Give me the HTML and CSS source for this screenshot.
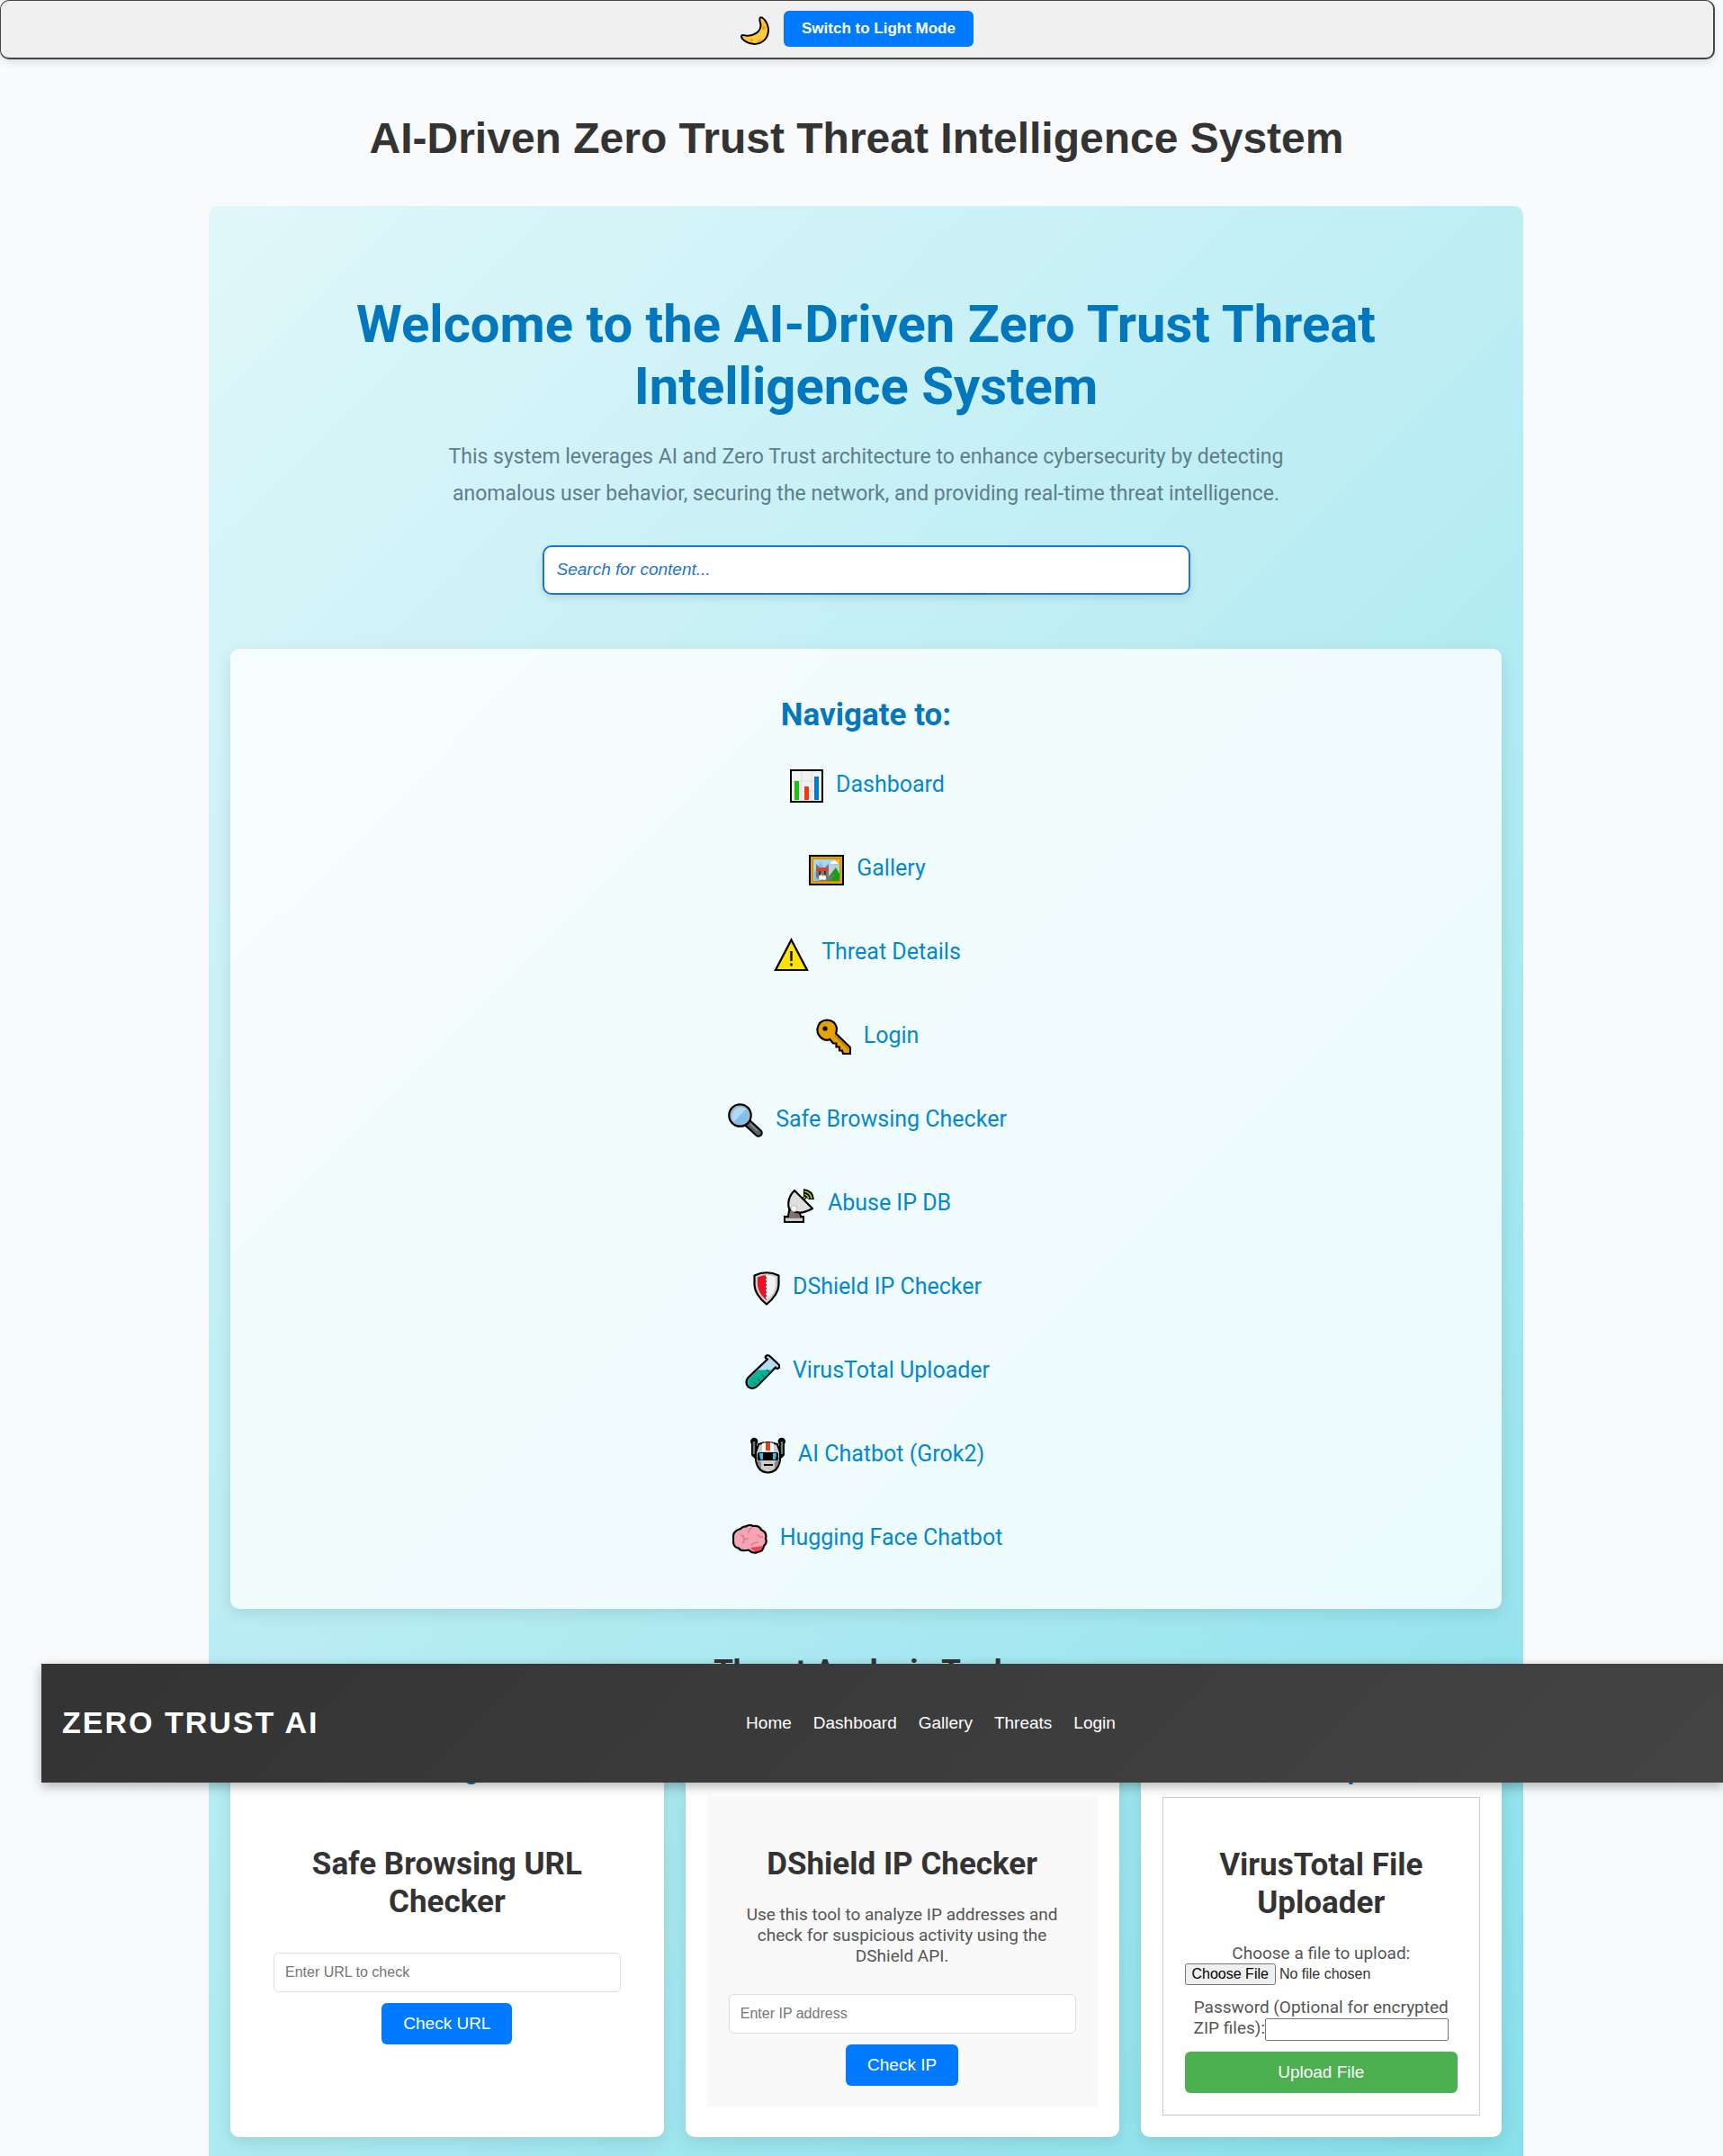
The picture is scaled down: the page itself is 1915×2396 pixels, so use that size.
FILE: index.html
```html
<!DOCTYPE html>
<html lang="en">
<head>
<meta charset="utf-8">
<meta name="viewport" content="width=device-width, initial-scale=1">
<title>AI-Driven Zero Trust Threat Intelligence System</title>
<link rel="stylesheet" href="styles.css">
</head>
<body>
<div class="page">
  <header class="theme-bar">
    <svg class="moon" width="32" height="32" viewBox="0 0 32 32" aria-hidden="true">
      <path d="M22 1.500C24-.3 31 7 31 15.500C31 24.500 24 31 15.500 31C9 31 1 26 1 22.500C1 20 4 21 6 21.500C14 22.500 22 18 22.500 10.500C22.500 7 20 3.500 22 1.500Z" fill="#ffc83d" stroke="#000" stroke-width="2" stroke-linejoin="round"/>
      <circle cx="26" cy="13" r="2" fill="#e8a200"/><circle cx="25.500" cy="8.500" r="1.200" fill="#f0ae14"/><circle cx="12.500" cy="26.500" r="1.500" fill="#e8a200"/>
      <path d="M18.500 29.500Q19.500 25 24 26Q22 29 18.500 29.500Z" fill="#e8a200"/>
    </svg>
    <button type="button" class="theme-button">Switch to Light Mode</button>
  </header>

  <h1 class="page-title">AI-Driven Zero Trust Threat Intelligence System</h1>

  <nav class="navbar" aria-label="Main">
    <div class="brand">ZERO TRUST AI</div>
    <div class="navbar-links">
      <a href="#">Home</a>
      <a href="#">Dashboard</a>
      <a href="#">Gallery</a>
      <a href="#">Threats</a>
      <a href="#">Login</a>
    </div>
  </nav>

  <div class="main-wrap">
    <main class="main">
      <section class="hero">
        <h2 class="hero-title">Welcome to the AI-Driven Zero Trust Threat Intelligence System</h2>
        <p class="hero-text">This system leverages AI and Zero Trust architecture to enhance cybersecurity by detecting anomalous user behavior, securing the network, and providing real-time threat intelligence.</p>
        <input class="search" type="search" placeholder="Search for content..." aria-label="Search for content">
      </section>

      <section class="navigate">
        <h2 class="navigate-title">Navigate to:</h2>
        <ul class="navigate-list">
          <li><a href="#">
            <svg width="37" height="44" viewBox="0 0 37 44" aria-hidden="true"><rect x="1" y="6" width="35" height="35" fill="#f2f2f2" stroke="#000" stroke-width="2"/><path d="M13 7v33M24 7v33M2 18h33M2 29h33" stroke="#ddd"/><path d="M5 18h5v21H5z" fill="#16c60c"/><path d="M16 24h5v15h-5z" fill="#f03a17"/><path d="M27 13h5v26h-5z" fill="#0078d7"/></svg>
            Dashboard</a></li>
          <li><a href="#">
            <svg width="39" height="44" viewBox="0 0 39 44" aria-hidden="true"><rect x="1" y="8" width="37" height="32" fill="#e8a200" stroke="#000" stroke-width="2"/><rect x="4.500" y="11.500" width="30" height="25" fill="#a8d5f2" stroke="#c48a12"/><path d="M6 28l7-13 7 12v9H6z" fill="#83beec"/><circle cx="30.500" cy="15" r="3" fill="#ffb900"/><path d="M24 17q0-3 3-3q2-2 4 1q2 0 1 2z" fill="#fff"/><path d="M24 20h4l2 16h-8z" fill="#ccc"/><path d="M23 30l7-9 4 7v8H19z" fill="#10a30c"/><path d="M11 36q6-6 11-4l6-4v3l-5 5z" fill="#777"/><path d="M8 17l4 4h6l4-4v14q-1 4-7 4t-7-4z" fill="#777"/><path d="M8 22h14v3H8z" fill="#f03a17"/><path d="M12 25v4M18 25v4" stroke="#222" stroke-width="1.500"/><path d="M11 31q4-4 8 0v3q-2 2-4 0q-2 2-4 0z" fill="#fff"/><path d="M14 29h3l-1 2z" fill="#e8632c"/></svg>
            Gallery</a></li>
          <li><a href="#">
            <svg width="39" height="44" viewBox="0 0 39 44" aria-hidden="true"><path d="M19.500 8.500L37 42H2z" fill="#fde300" stroke="#000" stroke-width="2.200"/><path d="M19.500 21v11M19.500 34.500v3" stroke="#000" stroke-width="2.400"/></svg>
            Threat Details</a></li>
          <li><a href="#">
            <svg width="39" height="44" viewBox="0 0 39 44" aria-hidden="true"><path d="M23 13.500Q23 17 22 19.500L38 35v7h-8l-1-3.500h-3v-4h-3.500v-4H19l-3.500-4.500Q11 28 6.500 25Q1 21 1.500 14.500Q3 5 12 4.500Q21.500 5 23 13.500Z" fill="#e8a200" stroke="#000" stroke-width="2.200"/><circle cx="10" cy="14" r="2.600"/><path d="M21 22l15 15" stroke="#c27800" stroke-width="1.500"/></svg>
            Login</a></li>
          <li><a href="#">
            <svg width="39" height="44" viewBox="0 0 39 44" aria-hidden="true"><path d="M22 26l12 11" stroke="#000" stroke-width="9.500" stroke-linecap="round"/><path d="M22 26l12 11" stroke="#586069" stroke-width="5.500" stroke-linecap="round"/><path d="M25 27l8 8" stroke="#899" stroke-width="1.500"/><circle cx="13.500" cy="17.500" r="12.200" fill="#b8b8b8" stroke="#000" stroke-width="2.200"/><circle cx="13.500" cy="17.500" r="10" fill="#83beec"/><path d="M6.500 24.500A10 10 0 0 1 20.500 10.500z" fill="#afd9f5"/></svg>
            Safe Browsing Checker</a></li>
          <li><a href="#">
            <svg width="35" height="44" viewBox="0 0 35 44" aria-hidden="true"><path d="M22 6q11 1 12 12h-6l-6-4z" fill="#000"/><path d="M23 9q7 1 8 8M23 12.500q4 1 4.500 4.500" fill="none" stroke="#bad80a" stroke-width="1.500"/><path d="M18 22l7-8" stroke="#000" stroke-width="3.500"/><path d="M18 22l6-7" stroke="#ccc" stroke-width="1.200"/><path d="M7 24l-2 13H1v6h21v-6h-3l-2-8z" fill="#767676" stroke="#000" stroke-width="2"/><path d="M2 39h19v3H2z" fill="#ccc"/><path d="M12 8C3 17 4 29 9 30Q18 36 32 28z" fill="#dedede" stroke="#000" stroke-width="2.200" stroke-linejoin="round"/><circle cx="11.500" cy="28" r="3.500" fill="#f2f2f2" stroke="#bbb"/><circle cx="14" cy="35.500" r="1.200" fill="#e8362c"/></svg>
            Abuse IP DB</a></li>
          <li><a href="#">
            <svg width="30" height="44" viewBox="0 0 30 44" aria-hidden="true"><path d="M1.500 9.500Q15 3 28.500 9.500V20Q28 31 15 41.500Q2 31 1.500 20Z" fill="#ccc" stroke="#000" stroke-width="2.200" stroke-linejoin="round"/><path d="M15 9Q9 9 5 11.500V20Q6 30 15 37z" fill="#e81224"/><path d="M15 9Q21 9 25 11.500V20Q24 30 15 37z" fill="#f2f2f2"/><path d="M15 9v28" stroke="#f2f2f2" stroke-width="2" stroke-dasharray="2 2"/></svg>
            DShield IP Checker</a></li>
          <li><a href="#">
            <svg width="39" height="44" viewBox="0 0 39 44" aria-hidden="true"><path d="M25 9.500q-4-2-1-4q2-1 4 1l9 8.500q3 3 0 4.500q-2 1-3-1L14 39q-5 5-10.500 1q-4-5 0-10z" fill="#b5dcf5" stroke="#000" stroke-width="2.300" stroke-linejoin="round"/><path d="M14.500 21.500h16L13 38.500q-4 3.500-8.500.5q-3-4 0-8z" fill="#00b294"/><path d="M24 21l3 3M18.500 26.500l3 3M14 31l3 3M9.500 35l3 3" stroke="#087d68" stroke-width="1.500"/></svg>
            VirusTotal Uploader</a></li>
          <li><a href="#">
            <svg width="39" height="44" viewBox="0 0 39 44" aria-hidden="true"><path d="M4 8v14l3 3M35 8v14l-3 3" fill="none" stroke="#000" stroke-width="6"/><circle cx="4.200" cy="8" r="4.200"/><circle cx="34.800" cy="8" r="4.200"/><path d="M4 8v14M35 8v14" stroke="#767676" stroke-width="2.500"/><path d="M9 11q10-4 21 0l3 9v8Q31 42 19.500 42.500Q8 42 6 28v-8z" fill="#ccc" stroke="#000" stroke-width="2.200"/><path d="M7 26l5 5v7q-5-4-5-12zM32 26l-5 5v7q5-4 5-12z" fill="#8a8a8a"/><path d="M13 10q7-2 13 0v9H13z" fill="#fff"/><path d="M17 9h5v9h-5z" fill="#f03a17"/><rect x="8" y="20" width="23" height="9" rx="2"/><path d="M10 21h4v7h-3zM25 21h4l-1 7h-3z" fill="#31c2ee"/><path d="M15 34h10" stroke="#000" stroke-width="2"/></svg>
            AI Chatbot (Grok2)</a></li>
          <li><a href="#">
            <svg width="39" height="44" viewBox="0 0 39 44" aria-hidden="true"><path d="M9 12q3-3 6-2.500q4-3 8-.5q7-1 9 4q7 3 5 10q2 5-2 8q-1 6-6 6.500q-6 3-11-2q-9 2-11-2q-6-1-6-7V19q1-5 8-7z" fill="#f4a5b5" stroke="#000" stroke-width="2.200" stroke-linejoin="round"/><path d="M20 33q6-1 14-2q-1 5-5 5.500q-5 2-9-3.500z" fill="#e74856"/><path d="M9 19q4 0 4 5q4-2 5-1M13 24q0 3-2 4M18 17q-1-4 4-6M28 18q2 4 6 3M21 31q1-4 8-4" fill="none" stroke="#e17a90" stroke-width="1.600"/></svg>
            Hugging Face Chatbot</a></li>
        </ul>
      </section>

      <section class="tools">
        <h2 class="tools-title">Threat Analysis Tools</h2>
        <div class="tools-grid">
          <article class="card">
            <h3 class="card-title">Safe Browsing Checker</h3>
            <form class="panel">
              <h2 class="panel-title">Safe Browsing URL Checker</h2>
              <input class="field" type="text" placeholder="Enter URL to check" aria-label="URL to check">
              <button type="button" class="action">Check URL</button>
            </form>
          </article>
          <article class="card">
            <h3 class="card-title">DShield IP Checker</h3>
            <form class="panel panel-grey">
              <h2 class="panel-title">DShield IP Checker</h2>
              <p class="panel-text">Use this tool to analyze IP addresses and check for suspicious activity using the DShield API.</p>
              <input class="field" type="text" placeholder="Enter IP address" aria-label="IP address">
              <button type="button" class="action">Check IP</button>
            </form>
          </article>
          <article class="card">
            <h3 class="card-title">VirusTotal Uploader</h3>
            <form class="panel panel-outlined">
              <h2 class="panel-title">VirusTotal File Uploader</h2>
              <label for="upload">Choose a file to upload:</label>
              <input class="file" id="upload" type="file">
              <label class="password">Password (Optional for encrypted ZIP files):<input type="password"></label>
              <button type="button" class="action action-upload">Upload File</button>
            </form>
          </article>
        </div>
      </section>
    </main>
  </div>
</div>
</body>
</html>
```
FILE: styles.css
```css
* { box-sizing: border-box; }

body {
  margin: 0;
  padding-right: 9px;
  background: #f8f9fa;
  color: #333;
  font-family: Roboto, sans-serif;
  font-size: 19px;
}

.page { background: #f8fafc; }

.theme-bar {
  display: flex;
  justify-content: center;
  align-items: center;
  gap: 16px;
  padding: 11px 12px 12px;
  background: #f0f0f0;
  border: 2px solid #444;
  border-width: 1px 2px 2px 1px;
  border-radius: 10px;
  box-shadow: 0 4px 8px rgba(0, 0, 0, .1);
}

.moon { margin-top: 4px; }

.theme-button {
  height: 40px;
  padding: 0 20px;
  border: 0;
  border-radius: 6px;
  background: #007bff;
  color: #fff;
  font: bold 17px "Liberation Sans", Arial, sans-serif;
}

.page-title {
  margin: 60px 0 48px;
  padding-right: 2px;
  font: bold 48px/55px "Liberation Sans", Arial, sans-serif;
  text-align: center;
}

/* Dark bar floating over the page content */
.navbar {
  position: absolute;
  top: 1849px;
  left: 46px;
  right: 0;
  z-index: 10;
  display: grid;
  grid-template-columns: 7fr 10fr;
  align-items: center;
  height: 132px;
  padding-left: 23px;
  background: linear-gradient(135deg, #333, #444);
  box-shadow: 0 4px 12px rgba(0, 0, 0, .3);
  color: #fff;
  font-family: "Liberation Sans", Arial, sans-serif;
}

.brand {
  padding-bottom: 2px;
  font-size: 34px;
  font-weight: bold;
  letter-spacing: 2px;
}

.navbar-links { display: flex; gap: 24px; }
.navbar-links a { color: #fff; text-decoration: none; }

.main-wrap { padding-left: 19px; }

.main {
  max-width: 1461px;
  margin: 0 auto;
  padding: 97px 24px 21px;
  border-radius: 10px 10px 0 0;
  background: linear-gradient(135deg, #e0f7fa 0%, #b2ebf2 54%, #80deea 108%);
}

.hero { text-align: center; }

.hero-title {
  max-width: 1200px;
  margin: 0 auto 23px;
  color: #0277bd;
  font-size: 58px;
  line-height: 69px;
}

.hero-text {
  max-width: 960px;
  margin: 0 auto 37px;
  color: #607d8b;
  font-size: 23px;
  line-height: 41px;
}

.search {
  display: block;
  width: 100%;
  max-width: 720px;
  height: 55px;
  margin: 0 auto 60px;
  padding: 0 14px 2px;
  border: 2px solid #1976d2;
  border-radius: 10px;
  background: #fff;
  box-shadow: 0 4px 10px rgba(0, 0, 0, .1);
  font: 19px "Liberation Sans", Arial, sans-serif;
  appearance: none;
}

.search::placeholder { color: #1976d2; font-style: italic; }

.navigate {
  padding: 53px 24px 33px;
  border-radius: 10px;
  background: rgba(255, 255, 255, .8);
  box-shadow: 0 5px 18px rgba(0, 0, 0, .1);
  text-align: center;
}

.navigate-title {
  margin: 0 0 10px;
  color: #0277bd;
  font-size: 35px;
  line-height: 41px;
}

.navigate-list {
  margin: 0;
  padding: 0;
  list-style: none;
}

.navigate-list li {
  display: flex;
  justify-content: center;
  align-items: center;
  height: 93px;
}

.navigate-list a {
  display: flex;
  align-items: center;
  gap: 14px;
  padding-left: 3px;
  color: #0288d1;
  font-size: 25px;
  text-decoration: none;
}

.tools { padding-top: 49px; }

.tools-title {
  margin: 0 0 49px;
  font-size: 35px;
  line-height: 41px;
  text-align: center;
}

.tools-grid {
  display: grid;
  grid-template-columns: 6fr 6fr 5fr;
  gap: 24px;
}

.card {
  padding: 24px;
  border-radius: 10px;
  background: #fff;
  box-shadow: 0 5px 18px rgba(0, 0, 0, .1);
  text-align: center;
}

.card-title {
  margin: 0 0 13px;
  color: #0277bd;
  font-size: 28px;
  line-height: 33px;
}

.panel {
  padding: 24px;
  color: #555;
  line-height: 23px;
}

.panel-grey { background: #f9f9f9; }
.panel-outlined { border: 1px solid #ccc; }

.panel-title {
  margin: 30px 0 35px;
  color: #333;
  font-size: 35px;
  line-height: 42px;
}

.panel-grey .panel-title,
.panel-outlined .panel-title { margin-bottom: 23px; }

.panel-text { margin: 0 0 31px; }

.field {
  display: block;
  width: 100%;
  height: 44px;
  margin-bottom: 12px;
  padding: 0 12px;
  border: 1px solid #ddd;
  border-radius: 6px;
  background: #fff;
  font: 16px "Liberation Sans", Arial, sans-serif;
}

.action {
  height: 46px;
  padding: 0 24px;
  border: 0;
  border-radius: 6px;
  background: #007bff;
  color: #fff;
  font: 19px "Liberation Sans", Arial, sans-serif;
}

.action-upload {
  display: block;
  width: 100%;
  background: #4caf50;
}

.file {
  display: block;
  width: 100%;
  margin-bottom: 13px;
  color: #333;
  font: 16px "Liberation Sans", Arial, sans-serif;
}

.password { display: block; margin-bottom: 12px; }

.password input {
  width: 204px;
  height: 25px;
  font-size: 16px;
}

@media (max-width: 1000px) {
  .tools-grid { grid-template-columns: 1fr; }
}
```
